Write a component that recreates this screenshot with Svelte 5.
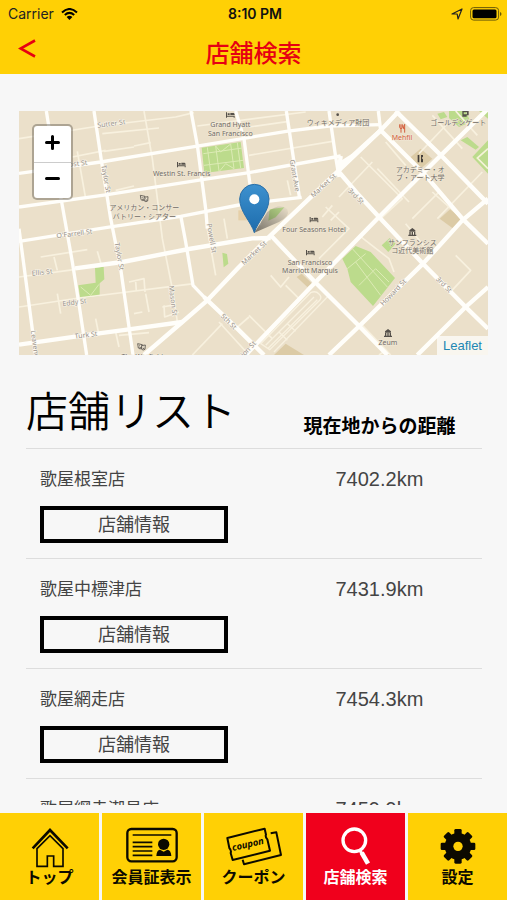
<script>
  const stores = [
    { name: '歌屋根室店', distance: '7402.2km' },
    { name: '歌屋中標津店', distance: '7431.9km' },
    { name: '歌屋網走店', distance: '7454.3km' },
    { name: '歌屋網走潮見店', distance: '7459.9km' }
  ];

  const tabs = [
    { id: 'home', label: 'トップ', box: '73 198 156 126' },
    { id: 'card', label: '会員証表示', box: '374 198 156 126' },
    { id: 'coupon', label: 'クーポン', box: '76 198 174 126' },
    { id: 'search', label: '店舗検索', box: '390 198 156 126' },
    { id: 'settings', label: '設定', box: '695 198 156 126' }
  ];
  let active = $state('search');

  const minorRoads = [
    'M0 100L240 62L470 35L525 22', 'M375 17L400 160L430 400L462 560L475 650', 'M175 138L200 280', 'M160 155L260 135',
    'M250 85L420 68', 'M345 122L395 112', 'M255 138L345 125', 'M290 255L345 242', 'M650 17L675 100',
    'M535 62L860 20', 'M690 65L810 48', 'M690 150L940 108', 'M0 515L165 493', 'M0 605L180 578L525 535',
    'M65 455L205 433', 'M105 455L115 495', 'M235 438L246 475', 'M115 565L125 625', 'M230 640L240 690',
    'M290 680L300 725', 'M300 690L390 682', 'M565 370L590 510', 'M615 340L625 400', 'M805 225L815 270',
    'M330 530L375 520L378 560', 'M350 530L352 555', 'M380 565L390 620', 'M345 625L370 620', 'M435 600L437 635L480 620', 'M430 605L470 598',
    'M960 275L1060 170', 'M1075 190L1170 290', 'M1025 155L1150 280L1085 340', 'M920 305L990 370L900 460', 'M940 300L910 335', 'M960 320L935 345',
    'M1240 260L1340 350', 'M1180 340L1260 260', 'M1390 200L1255 340', 'M1330 130L1240 30', 'M1200 145L1290 50', 'M1160 180L1100 110',
    'M1020 390L1110 460L1125 500', 'M1310 450L1355 495L1290 565', 'M1160 355L1230 440', 'M1030 660L1115 749', 'M755 510L785 545L810 515', 'M800 540L840 580',
    'M690 630L760 700', 'M690 635L650 670', 'M610 655L520 749', 'M600 650L690 749', 'M720 330L725 360', 'M1310 17L1375 90', 'M1070 720L1100 735L1080 749'
  ];

  const avenues = [
    'M82 17L100 130L128 290L160 470L182 610L203 749', 'M225 17L247 165L275 340L305 490L342 749', 'M516 17L535 120L560 310L565 370',
    'M650 17L675 100L692 230L705 300', 'M802 17L825 170L842 280', 'M0 370L20 520L50 749', 'M485 330L500 410L522 540L560 580',
    'M930 17L950 155L960 215', 'M0 204L245 170L530 123L802 78L930 62L1085 58', 'M1078 17L1085 75', 'M0 305L265 268L555 222L690 202L965 152',
    'M0 408L265 366L485 333L675 296L848 276'
  ];

  const mainRoads = [
    'M168 489L310 470L510 431L700 399L755 398', 'M0 718L195 690L330 672L490 650', 'M375 749L490 650L565 585L660 485L755 390L965 190L1085 75L1140 17',
    'M965 175L1000 152L1085 75L1215 205L1330 340L1407 415', 'M965 152L960 200L1020 270L1080 335L1212 475L1340 605L1407 670',
    'M1130 17L1268 152L1407 295', 'M1407 10L1190 225L1080 335L890 530L680 749', 'M755 390L888 530L1018 660L1105 749',
    'M555 575L655 670L735 749', 'M1407 280L1330 345L1212 475L1018 665L930 749', 'M1407 545L1340 605L1195 749'
  ];

  const streetNames = [
    ['Sutter St', 278, 62, -7], ['Post St', 172, 182, -7], ["O'Farrell St", 167, 392, -7], ['Ellis St', 70, 508, -6],
    ['Eddy St', 167, 598, -7], ['Turk St', 202, 696, -7], ['Taylor St', 254, 222, 80], ['Taylor St', 294, 454, 80],
    ['Powell St', 571, 400, 80], ['Mason St', 455, 587, 83], ['Leavenworth', 44, 740, 82], ['Grant Ave', 820, 212, 80],
    ['Market St', 918, 246, -43], ['Market St', 710, 448, -43], ['3rd St', 1006, 278, 45], ['3rd St', 1270, 543, 45],
    ['5th St', 624, 654, 45], ['Howard St', 1128, 566, -46], ['Mission St', 678, 752, -47]
  ];

  const places = [
    ['Grand Hyatt', 634, 66], ['San Francisco', 634, 93], ['Westin St. Francis', 488, 213],
    ['アメリカン・コンサー', 376, 315], ['バトリー・シアター', 376, 341], ['ウィキメディア財団', 957, 58],
    ['ゴールデンゲート', 1318, 59], ['アカデミー・オ', 1204, 199], ['ブ・アート大学', 1204, 225],
    ['サンフランシス', 1180, 418], ['コ近代美術館', 1180, 444], ['Four Seasons Hotel', 885, 380],
    ['San Francisco', 873, 478], ['Marriott Marquis', 873, 504], ['Zeum', 1107, 720], ['The Warfield', 370, 762]
  ];

  const beds = [[634, 29], [487, 178], [885, 343], [874, 442]];
  const museums = [[1180, 380], [1107, 683]];
  const masks = [[375, 279], [367, 724]];
</script>

<div class="app">
  <header>
    <div class="status">
      <div class="carrier">
        <span>Carrier</span>
        <svg width="17" height="12" viewBox="0 0 17 12" aria-hidden="true">
          <path d="M1 4.5Q8.500-2.500 16 4.500M3.800 7Q8.500 2.700 13.200 7" fill="none" stroke="#000" stroke-width="2" />
          <path d="M8.500 12L5.600 9Q8.500 6.500 11.400 9Z" />
        </svg>
      </div>
      <span class="time">8:10 PM</span>
      <div class="power">
        <svg width="12" height="12" viewBox="0 0 12 12" aria-hidden="true">
          <path d="M1 6L11 1L7 11L6.200 6Z" fill="none" stroke="#222" stroke-width="1.200" stroke-linejoin="round" />
        </svg>
        <svg width="32" height="14" viewBox="0 0 32 14" aria-hidden="true">
          <rect x=".6" y=".6" width="28" height="12.500" rx="3" fill="none" stroke="#6b5a08" stroke-width="1" />
          <rect x="2.500" y="2.500" width="24" height="8.800" rx="1.500" />
          <path d="M30 5V9Q31.500 8.500 31.500 7T30 5Z" fill="#6b5a08" />
        </svg>
      </div>
    </div>
    <div class="title">
      <button class="back" aria-label="戻る">
        <svg width="18" height="20" viewBox="0 0 18 20" aria-hidden="true">
          <path d="M17 1.500L2.500 9.500L17 17.500" fill="none" stroke="#e60012" stroke-width="2.600" />
        </svg>
      </button>
      <h1>店舗検索</h1>
    </div>
  </header>

  <main>
    <section class="map" aria-label="地図">
      <svg class="tiles" viewBox="0 17 1407 732" aria-hidden="true">
        <rect y="17" width="1407" height="732" fill="#ebe0ca" />
        <g fill="#dccba6">
          <path d="M1175 155L1205 130L1240 160L1205 190Z" />
          <path d="M1262 340L1295 310L1335 345L1305 372Z" />
          <path d="M833 515L848 505L880 535L865 545Z" />
          <path d="M765 749L800 715L855 749Z" />
          <path d="M658 315H685V345H658Z" fill="#e6cfa8" />
        </g>
        <g fill="#bcdb8c">
          <path d="M548 127L665 110L675 188L556 203Z" />
          <path d="M228 488L254 484L256 522L242 534V572L184 580L178 540L230 532Z" />
          <path d="M610 442L624 446L628 475L614 486Z" />
          <path d="M752 312L796 306L770 336L748 346Z" />
          <path d="M970 460L1010 422L1055 440L1128 518L1062 602L995 530L985 490Z" />
          <path d="M1088 420L1112 398L1130 415L1108 440Z" />
          <path d="M1325 105L1345 95L1380 125L1370 133Z" />
          <path d="M1360 155L1407 105V205Z" />
          <path d="M1255 25L1275 20L1285 35L1265 42ZM1290 17L1340 17L1355 50L1320 65L1290 38ZM1380 17H1407V40Z" />
        </g>
        <g fill="none" stroke="#dcebb5" stroke-width="3">
          <path d="M553 145L670 128M555 180L672 165M590 122L600 197M635 116L645 190M590 122L605 140L635 116M602 197L620 175L645 190M565 126L575 200M655 112L665 188" />
          <path d="M185 545L215 570L240 537M1000 430L1105 545M985 490L1040 445M1020 540L1070 490L1110 530M1010 470L1085 570" />
          <path d="M1407 130L1375 158L1407 190" stroke="#f5f3d8" stroke-width="5" />
        </g>
        <g class="roads minor">
          {#each minorRoads as d}<path {d} />{/each}
        </g>
        <g class="lot">
          <path d="M725 715L875 562Q890 555 900 566Q910 575 902 585L752 733ZM740 720L885 575M748 728L895 583M780 680L805 705M805 655L830 678" />
          <path d="M930 570L765 740" />
        </g>
        <g class="roads avenue">
          {#each avenues as d}<path {d} />{/each}
        </g>
        <g class="roads main-road">
          {#each mainRoads as d}<path {d} />{/each}
        </g>

        <g class="street">
          {#each streetNames as [name, x, y, angle]}
            <text transform="translate({x} {y}) rotate({angle})">{name}</text>
          {/each}
        </g>
        <g class="place">
          {#each places as [name, x, y]}<text {x} {y}>{name}</text>{/each}
          <text x="1149" y="103" class="food">Mehfil</text>
        </g>

        {#each beds as [x, y]}
          <path transform="translate({x} {y})" d="M-13-8H-10V2H13V8H10V5H-10V8H-13ZM-8-5H-2V0H-8ZM0-6H10Q13-5 13 0H0Z" fill="#55504a" />
        {/each}
        {#each museums as [x, y]}
          <path transform="translate({x} {y})" d="M0-12L9-5V-1H-9V-5ZM-9 0H-5V8H-9ZM-2 0H2V8H-2ZM5 0H9V8H5ZM-12 8H12V12H-12Z" fill="#55504a" />
        {/each}
        {#each masks as [x, y]}
          <g transform="translate({x} {y})" fill="#efe6d2" stroke="#55504a" stroke-width="2.500">
            <path d="M-11-9L3-6L1 5Q-4 9-9 4Z" /><path d="M0-3L12-5L11 8Q5 12 1 8Z" />
            <path d="M-7-3L-4-2M-6 3H-1M4 1H6M4 6L9 5" />
          </g>
        {/each}
        <circle cx="956" cy="28" r="4" fill="#55504a" />
        <path d="M1330 17H1349V30H1343V34H1330ZM1334 21V27H1344V21Z" fill="#55504a" fill-rule="evenodd" />
        <path d="M1196 149H1201V171H1196ZM1206 149H1212V154L1208 158L1212 162V171H1206Z" fill="#443f3a" />
        <path d="M1142 57V66Q1143 70 1146 70V82M1146 57V70M1150 57V66Q1149 70 1146 70M1157 82V57Q1153 62 1153 70H1157" fill="none" stroke="#d35d3c" stroke-width="3" />

        <defs>
          <linearGradient id="pin" x1="0" y1="0" x2="0" y2="1">
            <stop offset="0" stop-color="#3d91cf" /><stop offset="1" stop-color="#1d6cac" />
          </linearGradient>
          <linearGradient id="shade" x1="0" y1="1" x2="1" y2="0">
            <stop offset="0" stop-color="#000" stop-opacity=".5" /><stop offset="1" stop-color="#000" stop-opacity="0" />
          </linearGradient>
        </defs>
        <path d="M706 382L745 320Q785 290 805 312Q815 332 780 350Z" fill="url(#shade)" />
        <path d="M706 382C697 350 662 320 662 281A44 44 0 0 1 750 281C750 320 715 350 706 382Z" fill="url(#pin)" stroke="#2a6fa8" stroke-width="3" />
        <circle cx="706" cy="282" r="15" fill="#fff" />
      </svg>
      <div class="zoom">
        <button aria-label="拡大">
          <svg width="15" height="15" viewBox="0 0 15 15" aria-hidden="true"><path d="M7.500 1.500V13.500M1.500 7.500H13.500" /></svg>
        </button>
        <button aria-label="縮小">
          <svg width="15" height="15" viewBox="0 0 15 15" aria-hidden="true"><path d="M1.500 7.500H13.500" /></svg>
        </button>
      </div>
      <a class="credit" href="#leaflet">Leaflet</a>
    </section>

    <table>
      <thead>
        <tr><th class="list-title" scope="col">店舗リスト</th><th class="far" scope="col">現在地からの距離</th></tr>
      </thead>
      <tbody>
        {#each stores as store}
          <tr>
            <td>
              <div class="name">{store.name}</div>
              <button class="info">店舗情報</button>
            </td>
            <td class="distance">{store.distance}</td>
          </tr>
        {/each}
      </tbody>
    </table>
  </main>

  <nav>
    {#each tabs as tab}
      <button class:active={active === tab.id} onclick={() => (active = tab.id)}>
        <svg height="42" viewBox={tab.box} aria-hidden="true">
          {#if tab.id === 'home'}
            <path d="M99 265L151 210L204 265" fill="none" stroke="currentColor" stroke-width="8" />
            <path d="M112 319V266L151 227L190 266V319H162V288H143V319Z" fill="none" stroke="currentColor" stroke-width="5" />
          {:else if tab.id === 'card'}
            <rect x="378" y="207" width="148" height="97" rx="12" fill="none" stroke="currentColor" stroke-width="7" />
            <path d="M394 225H510M394 247H453M394 260H453M394 273H453M394 286H453" stroke="currentColor" stroke-width="5" />
            <circle cx="487" cy="253" r="17" fill="currentColor" />
            <path d="M465 288Q466 270 476 269L487 275L498 269Q509 270 510 288Z" fill="currentColor" />
          {:else if tab.id === 'coupon'}
            <path d="M213 220L230 217L244 285L133 313L129 299" fill="none" stroke="currentColor" stroke-width="6" stroke-linejoin="round" />
            <path d="M83 234L195 206L199 224Q196 230 203 238L211 272L99 300L93 279Q96 272 89 264Z" fill="none" stroke="currentColor" stroke-width="6" stroke-linejoin="round" />
            <text x="145" y="262" transform="rotate(-13 145 255)">coupon</text>
          {:else if tab.id === 'search'}
            <circle cx="463" cy="241" r="34" fill="none" stroke="currentColor" stroke-width="10" />
            <path d="M479 270L488 284" stroke="currentColor" stroke-width="9" />
            <path d="M485 278L504 311" stroke="currentColor" stroke-width="14" />
          {:else}
            <g fill="currentColor">
              {#each [0, 45, 90, 135] as angle}
                <rect x="762" y="207" width="22" height="104" rx="4" transform="rotate({angle} 773 259)" />
              {/each}
            </g>
            <circle cx="773" cy="259" r="27" fill="none" stroke="currentColor" stroke-width="26" />
            <circle cx="773" cy="259" r="14" fill="#ffd005" />
          {/if}
        </svg>
        <span>{tab.label}</span>
      </button>
    {/each}
  </nav>
</div>

<style>
  :global(body) { margin: 0; background: #f7f7f7; }
  .app {
    display: flex;
    flex-direction: column;
    height: 100vh;
    background: #f7f7f7;
    color: #000;
    font-family: "Liberation Sans", "Noto Sans CJK JP", sans-serif;
  }
  button { margin: 0; padding: 0; border: 0; background: none; font: inherit; color: inherit; cursor: pointer; }
  header { background: #ffd005; }
  .status {
    display: grid;
    grid-template-columns: 1fr auto 1fr;
    align-items: center;
    height: 27px;
    padding: 0 5px 0 8px;
    font: 14px/18px Inter, sans-serif;
    color: #222;
  }
  .carrier, .power { display: flex; align-items: center; gap: 7px; }
  .power { justify-content: flex-end; }
  .time { font-weight: 600; color: #111; }
  .title {
    display: grid;
    grid-template-columns: 1fr auto 1fr;
    height: 47px;
  }
  .back { justify-self: start; display: flex; padding: 12px 18px; }
  h1 { margin: 0; padding-top: 7px; font-size: 24px; line-height: 36px; font-weight: 500; color: #e60012; }
  h1, th { font-family: "Noto Sans CJK JP", sans-serif; }
  main { flex: 1; min-height: 0; overflow-y: auto; scrollbar-width: none; padding: 37px 19px 0; }
  .map { position: relative; overflow: hidden; }
  .tiles { display: block; width: 100%; }
  .roads { fill: none; stroke: #fffefa; stroke-linejoin: round; }
  .minor { stroke: #f8f1df; stroke-width: 5; }
  .avenue { stroke-width: 10; }
  .main-road { stroke-width: 13; }
  .lot { fill: none; stroke: #f8f1df; stroke-width: 4; }
  .tiles text { text-anchor: middle; font-family: "Noto Sans", "Noto Sans CJK JP", sans-serif; }
  .street { font-size: 21px; fill: #99928a; stroke: #fbf7ee; stroke-width: 3; paint-order: stroke; }
  .place { font-size: 21px; fill: #706a65; stroke: #f2ead9; stroke-width: 3; paint-order: stroke; }
  .place .food { fill: #d35d3c; }
  .zoom {
    position: absolute;
    top: 13px;
    left: 13px;
    width: 37px;
    border: 2px solid rgba(80, 75, 65, .4);
    border-radius: 5px;
    background: #fff;
    background-clip: padding-box;
  }
  .zoom button { display: flex; align-items: center; justify-content: center; width: 100%; height: 36px; padding-bottom: 4px; }
  .zoom button + button { border-top: 1px solid #ccc; }
  .zoom path { fill: none; stroke: #000; stroke-width: 3; stroke-linecap: round; }
  .credit {
    position: absolute;
    right: 0;
    bottom: 0;
    padding: 0 6px;
    background: rgba(255, 255, 255, .7);
    color: #2187b3;
    font-size: 13px;
    line-height: 19px;
    text-decoration: none;
  }
  table { width: calc(100% - 13px); margin: 0 auto 0 7px; border-collapse: collapse; table-layout: fixed; }
  th { padding: 0; vertical-align: bottom; white-space: nowrap; }
  .list-title { width: 55%; height: 84px; padding-bottom: 9px; text-align: left; font-size: 42px; line-height: 60px; font-weight: 350; }
  .far { padding-bottom: 9px; font-size: 19px; line-height: 28px; font-weight: 700; }
  td { height: 93px; padding: 16px 0 0; border-top: 1px solid #ddd; vertical-align: top; color: #444; }
  td:first-child { padding-left: 14px; }
  .name { font-size: 17px; line-height: 30px; }
  .info {
    display: block;
    width: 188px;
    height: 37px;
    margin-top: 11px;
    border: 4px solid #000;
    font-size: 18px;
    line-height: 28px;
  }
  .distance { font-size: 20px; line-height: 28px; text-align: center; }
  nav { display: grid; grid-template-columns: repeat(5, 1fr); gap: 3px; margin-top: 8px; }
  nav button {
    display: flex;
    flex-direction: column;
    align-items: center;
    height: 87px;
    padding-top: 13px;
    background: #ffd005;
    color: #0c0a00;
    font: 700 16px/16px "Noto Sans CJK JP", sans-serif;
    white-space: nowrap;
  }
  nav button.active { background: #f0001c; color: #fff; }
  nav svg { flex: none; }
  nav text { font: italic 700 28px "Noto Sans", sans-serif; text-anchor: middle; fill: currentColor; }
</style>
